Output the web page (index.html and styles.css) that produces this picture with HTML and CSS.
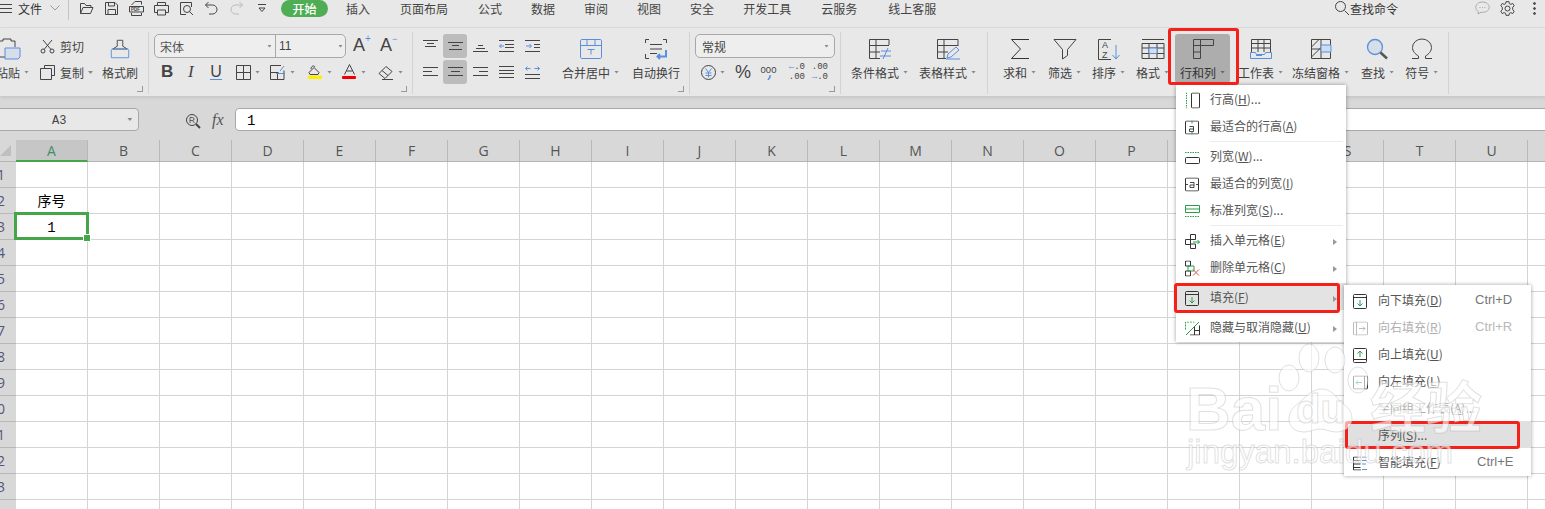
FILE: index.html
```html
<!DOCTYPE html>
<html lang="zh">
<head>
<meta charset="utf-8">
<title>WPS 表格</title>
<link rel="stylesheet" href="styles.css">
</head>
<body>
<div class="app">
  <header class="topbar">
    <svg class="i menu-ic" width="12" height="12" viewBox="0 0 12 12"><path d="M0 2.5h12M0 6.5h12M0 10.5h12"/></svg>
    <span class="file">文件</span>
    <svg class="i chev" width="10" height="6" viewBox="0 0 10 6"><path d="M.5.5 5 5 9.5.5" stroke="#999"/></svg>
    <span class="vsep"></span>
    <div class="quick">
      <svg class="i" width="15" height="15" viewBox="0 0 15 15"><path d="M1.5 12.5v-10h4l1.500 2h5v2M1.500 12.500l2.500-6h10l-2.500 6z"/></svg>
      <svg class="i" width="15" height="15" viewBox="0 0 15 15"><path d="M1.500 1.500h9.500l2.500 2.500v9.500h-12zM4.500 1.500v3.500h6v-3.500M4 13.500v-5h7.500v5"/></svg>
      <svg class="i" width="15" height="15" viewBox="0 0 15 15"><path d="M2.500 4 6 .5h6.500v3M2.500 12v2.500h10V12M.5 5.500h14v5.500H.5z"/><text x="2" y="10" class="pdf">PDF</text></svg>
      <svg class="i" width="15" height="15" viewBox="0 0 15 15"><path d="M3.500 4.500v-3h8v3M3.500 11.500h-3v-7h14v7h-3M3.500 9v5h8V9z"/></svg>
      <svg class="i" width="15" height="15" viewBox="0 0 15 15"><path d="M12.500 6V1.500h-11v12H7"/><circle cx="8" cy="8" r="3.500"/><path d="m10.500 10.500 3.500 3.500"/></svg>
      <svg class="i" width="15" height="15" viewBox="0 0 15 15"><path d="M4.500 1 1.500 4l3 3M1.500 4h7a4.500 4.500 0 0 1 0 9H5"/></svg>
      <svg class="i" width="15" height="15" viewBox="0 0 15 15"><path stroke="#bbb" d="M10.500 1l3 3-3 3M13.500 4h-7a4.500 4.500 0 0 0 0 9H10"/></svg>
      <svg class="i ml3" width="10" height="15" viewBox="0 0 10 15"><path d="M1 3.500h8M2 7l3 3.500L8 7z"/></svg>
    </div>
    <span class="pill">开始</span>
    <nav class="tabs">
      <span>插入</span><span class="ml1">页面布局</span><span class="ml1">公式</span><span>数据</span><span>审阅</span><span>视图</span><span>安全</span><span>开发工具</span><span class="ml1">云服务</span><span class="ml2">线上客服</span>
    </nav>
    <div class="search">
      <svg class="i" width="16" height="16" viewBox="0 0 16 16"><circle cx="6.500" cy="6.500" r="5"/><path d="m10.500 10.500 4.500 4.500"/></svg>
      <span>查找命令</span>
    </div>
    <svg class="i bubble" width="15" height="14" viewBox="0 0 15 14"><path stroke="#aaa" d="M7.500 1C3.500 1 .8 3.300.8 6.300c0 1.800 1 3.300 2.500 4.200L3 13l3-1.800c.5.100 1 .1 1.500.1 4 0 6.700-2.200 6.700-5S11.500 1 7.500 1z"/><path stroke="#aaa" d="M4.500 6.500h1M7 6.500h1M9.500 6.500h1"/></svg>
    <svg class="i gear" width="15" height="15" viewBox="0 0 15 15"><circle cx="7.500" cy="7.500" r="2.500"/><path d="M6 .7h3l.4 2 1.500.7 1.800-1 1.500 2.400-1.500 1.400v2.600l1.500 1.400-1.500 2.400-1.800-1-1.500.7-.4 2H6l-.4-2-1.500-.7-1.800 1L.8 10.200l1.500-1.400V6.200L.8 4.800l1.500-2.400 1.800 1 1.500-.7z"/></svg>
    <span class="dots"></span>
  </header>

  <section class="ribbon">
    <div class="grp g1">
      <div class="tool paste">
        <svg class="i" width="24" height="24" viewBox="0 0 24 24"><path d="M1 20V4h4V2h8v2h4v6M1 20h7"/><path class="bluefill" d="M7 11h15v9l-2 2H7z"/></svg>
        <span class="lab"><span>粘贴</span><i class="car"></i></span>
      </div>
      <div class="smalls">
        <div class="sm">
          <svg class="i" width="15" height="15" viewBox="0 0 15 15"><circle cx="3" cy="12" r="2"/><circle cx="12" cy="12" r="2"/><path d="M4 10.500 12 1M11 10.500 3 1"/></svg>
          <span>剪切</span>
        </div>
        <div class="sm">
          <svg class="i" width="15" height="15" viewBox="0 0 15 15"><path d="M4.500 3.500v-3h10v10h-3M.5 3.500h11v11H.5z"/></svg>
          <span>复制</span><i class="car"></i>
        </div>
      </div>
      <div class="tool">
        <svg class="i" width="22" height="24" viewBox="0 0 22 24"><path d="M8 9V2.500h6V9l5 3H3z"/><path stroke="#5a8fdc" d="M2 12h18M1.500 12.500v9h19v-9"/></svg>
        <span class="lab"><span>格式刷</span></span>
      </div>
      <i class="launch"></i>
    </div>

    <div class="grp g2">
      <div class="frow">
        <div class="select fontsel">
          <span class="fname">宋体</span><i class="car"></i>
          <span class="fsize">11</span><i class="car"></i>
        </div>
        <span class="bigA">A<sup class="plus">+</sup></span>
        <span class="bigA minus">A<sup class="minus-s">−</sup></span>
      </div>
      <div class="ficons">
        <b class="fB">B</b>
        <i class="fI">I</i>
        <span class="fU">U</span>
        <span class="fi"><svg class="i" width="15" height="15" viewBox="0 0 15 15"><path d="M.5.500h14v14H.5zM7.500.5v14M.5 7.500h14"/></svg><i class="car"></i></span>
        <span class="fi"><svg class="i" width="16" height="15" viewBox="0 0 16 15"><path d="M14 5.500v9H.5V.5H11M.5 7.500h8M7.500 7v7"/><path stroke="#5a8fdc" d="M6 8.500h9M10 6l4-5"/></svg><i class="car"></i></span>
        <span class="fi"><svg class="i" width="16" height="16" viewBox="0 0 16 16"><path d="M2 8.500 7 3.500l5 5-1 2H3zM4 5c0-3 3-4 4-2"/><rect x="1" y="11.500" width="14" height="3.500" rx="1" fill="#ffee00" stroke="none"/></svg><i class="car"></i></span>
        <span class="fi"><svg class="i" width="15" height="16" viewBox="0 0 15 16"><path d="m2.500 10.500 5-10 5 10M4.500 7h6"/><rect x="0" y="12" width="14" height="3" rx="1" fill="#f00000" stroke="none"/></svg><i class="car"></i></span>
        <span class="fi"><svg class="i" width="16" height="15" viewBox="0 0 16 15"><path d="m1 8.500 7-7 6 5-7 7zM4 5.500l6 5M4 14.500h11"/></svg><i class="car"></i></span>
      </div>
      <i class="launch"></i>
    </div>

    <div class="grp g3">
      <div class="aligns">
        <span class="al"><svg class="i" width="15" height="12" viewBox="0 0 15 12"><path d="M0 .5h15M4 3.500h7M2 6.500h11"/></svg></span>
        <span class="al on"><svg class="i" width="15" height="12" viewBox="0 0 15 12"><path d="M0 2.500h15M4 5.500h7M1 9.500h13"/></svg></span>
        <span class="al"><svg class="i" width="15" height="12" viewBox="0 0 15 12"><path d="M5 5.500h5M3 8.500h9M0 11.500h15"/></svg></span>
        <span class="al"><svg class="i" width="15" height="12" viewBox="0 0 15 12"><path d="M0 .5h15M6 4.500h9M6 7.500h9M0 11.500h15"/><path stroke="#5a8fdc" d="M5 6H.5M2.500 4 .5 6l2 2"/></svg></span>
        <span class="al"><svg class="i" width="15" height="12" viewBox="0 0 15 12"><path d="M0 .5h15M9 4.500h6M9 7.500h6M0 11.500h15"/><path stroke="#5a8fdc" d="M1 6h5M4.500 4l2 2-2 2"/></svg></span>
        <span class="al"><svg class="i" width="15" height="12" viewBox="0 0 15 12"><path d="M0 1.500h15M0 5.500h9M0 9.500h15"/></svg></span>
        <span class="al on"><svg class="i" width="15" height="12" viewBox="0 0 15 12"><path d="M0 1.500h15M3 5.500h9M0 9.500h15"/></svg></span>
        <span class="al"><svg class="i" width="15" height="12" viewBox="0 0 15 12"><path d="M0 1.500h15M6 5.500h9M0 9.500h15"/></svg></span>
        <span class="al"><svg class="i" width="15" height="12" viewBox="0 0 15 12"><path d="M0 .5h15M0 4.500h15M0 7.500h15M0 11.500h15"/></svg></span>
        <span class="al"><svg class="i" width="15" height="14" viewBox="0 0 15 14"><path d="M0 9.500h15M0 13.500h15"/><path stroke="#5a8fdc" d="M.5 3.500h5M2.500 1.500l-2 2 2 2M9.500 3.500h5M12.500 1.500l2 2-2 2"/></svg></span>
      </div>
      <div class="tool merge">
        <svg class="i" width="24" height="22" viewBox="0 0 24 22"><path stroke="#5a8fdc" d="M1.500 3C1.500 2 2 1.500 3 1.500h18c1 0 1.500.5 1.500 1.500v16c0 1-.5 1.500-1.500 1.500H3c-1 0-1.500-.5-1.500-1.500zM1.500 7.500h21M8 1.500v6M16 1.500v6M8.500 11.500h7M12 11.500v5"/></svg>
        <span class="lab"><span>合并居中</span><i class="car"></i></span>
      </div>
      <div class="tool wrap">
        <svg class="i" width="24" height="22" viewBox="0 0 24 22"><path d="M5 1.500H1.500V5M19 1.500h3.500V5M1.500 16v4.500H5M6 6.500h12M6 11h12M6 15.500h7"/><path stroke="#5a8fdc" stroke-width="2" d="M22 12v6.500H14M16 16l-2.500 2.500L16 21"/></svg>
        <span class="lab"><span>自动换行</span></span>
      </div>
      <i class="launch"></i>
    </div>

    <div class="grp g4">
      <div class="select numsel"><span>常规</span><i class="car"></i></div>
      <div class="nicons">
        <span class="fi"><svg class="i" width="15" height="15" viewBox="0 0 15 15"><circle cx="7.500" cy="7.500" r="7"/><path stroke="#5a8fdc" d="m4.500 3.500 3 4 3-4M4.500 8h6M4.500 10.500h6M7.500 7.500v5"/></svg><i class="car"></i></span>
        <span class="pct">%</span>
        <span class="thou">000<svg class="i comma" width="4" height="5" viewBox="0 0 4 5"><path d="M3 0v2L1 5" stroke="#5a8fdc" stroke-width="1.500"/></svg></span>
        <span class="dec"><span><em>←</em>.0</span><span>.00</span></span>
        <span class="dec"><span>.00</span><span><em>→</em>.0</span></span>
      </div>
      <i class="launch"></i>
    </div>

    <div class="grp g5">
      <div class="tool">
        <svg class="i" width="24" height="22" viewBox="0 0 24 22"><path d="M21 7V1.500H1.500v19H12M1.500 7.500H21M1.500 14H12M8 1.500v19"/><path stroke="#5a8fdc" d="M13 13h10M12 18h11M20 10l-5 11"/></svg>
        <span class="lab"><span>条件格式</span><i class="car"></i></span>
      </div>
      <div class="tool">
        <svg class="i" width="24" height="22" viewBox="0 0 24 22"><path d="M22 8V1.500H1.500v19H10M1.500 7.500H22M1.500 14H12M8 1.500v19"/><path stroke="#5a8fdc" d="m11 20 1-4 8-7 3 3-8 7zM10 21h14"/></svg>
        <span class="lab"><span>表格样式</span><i class="car"></i></span>
      </div>
    </div>

    <div class="grp g6">
      <div class="tool mr1">
        <svg class="i" width="20" height="22" viewBox="0 0 20 22"><path d="M19 1.500H1.500l9 9.500-9 9.500H19" stroke="#333"/></svg>
        <span class="lab"><span>求和</span><i class="car"></i></span>
      </div>
      <div class="tool">
        <svg class="i" width="24" height="22" viewBox="0 0 24 22"><path d="M1 1.500h22l-8.500 10v6l-5 3.500v-9.500z"/></svg>
        <span class="lab"><span>筛选</span><i class="car"></i></span>
      </div>
      <div class="tool">
        <svg class="i" width="24" height="22" viewBox="0 0 24 22"><path d="M14 1.500H1.500v20H14"/><text x="5" y="10" class="az">A</text><text x="5" y="20" class="az">Z</text><path stroke="#5a8fdc" d="M19 7v14M15.500 17l3.500 4 3.500-4"/></svg>
        <span class="lab"><span>排序</span><i class="car"></i></span>
      </div>
      <div class="tool">
        <svg class="i" width="24" height="22" viewBox="0 0 24 22"><path d="M1 1.500h22M1 5.500h22v15H1zM1 10h22M1 15.500h22M8 5.500v15M16 5.500v15"/><path stroke="#5a8fdc" fill="#d6deea" d="M8 10h8v5.500H8z"/></svg>
        <span class="lab"><span>格式</span><i class="car"></i></span>
      </div>
      <div class="tool active">
        <svg class="i" width="22" height="22" viewBox="0 0 22 22"><path d="M1.500 1.500h20v6h-13v13h-7zM8.500 1.500v6H1.500M1.500 14h7"/></svg>
        <span class="lab"><span>行和列</span><i class="car"></i></span>
      </div>
      <div class="tool ml2">
        <svg class="i" width="22" height="22" viewBox="0 0 22 22"><path d="M1.500 14V1.500h19V14M1.500 5.500h19M1.500 10h19M8 1.500V14M14 1.500V14"/><path stroke="#5a8fdc" d="M.5 14.500h5l1 2h8l1-2h6v6H.5zM6 17.500h6"/></svg>
        <span class="lab"><span>工作表</span><i class="car"></i></span>
      </div>
      <div class="tool mln2">
        <svg class="i" width="22" height="22" viewBox="0 0 22 22"><path d="M1.500 1.500h19v19h-19zM1.500 11h19M11 1.500v19M1.500 9 9 1.500M1.500 19 11 9.500M13 1.500"/><path fill="#cfdcef" stroke="#5a8fdc" d="M11 7h10v7H11z"/></svg>
        <span class="lab"><span>冻结窗格</span><i class="car"></i></span>
      </div>
      <div class="tool ml1">
        <svg class="i" width="23" height="22" viewBox="0 0 23 22"><circle cx="9" cy="9" r="7.500" fill="#d6deea" stroke="#5a8fdc" stroke-width="1.300"/><path stroke-width="2.500" stroke="#555" d="m14.500 14.500 6.500 6"/></svg>
        <span class="lab"><span>查找</span><i class="car"></i></span>
      </div>
      <div class="tool">
        <svg class="i" width="22" height="22" viewBox="0 0 22 22"><path d="M1 20.500h6.500v-2.500C4 16 1.500 13 1.500 9.500a9.500 8.500 0 0 1 19 0c0 3.500-2.500 6.500-6 8.500v2.500H21"/></svg>
        <span class="lab"><span>符号</span><i class="car"></i></span>
      </div>
    </div>
  </section>

  <section class="fbar">
    <div class="namebox"><span>A3</span><i class="car"></i></div>
    <svg class="i zoomr" width="16" height="16" viewBox="0 0 16 16"><circle cx="7" cy="7" r="5.500"/><path d="M5 10V4.500h2.500a1.500 1.500 0 0 1 0 3H5M7.500 7.500 9.500 10" stroke-width=".8"/><path stroke-width="2" d="m11 11 4 4"/></svg>
    <span class="fx">fx</span>
    <div class="finput">1</div>
  </section>

  <section class="sheet">
    <div class="colhead">
      <div class="corner"><i></i></div>
      <div class="col sel">A</div><div class="col">B</div><div class="col">C</div><div class="col">D</div><div class="col">E</div><div class="col">F</div><div class="col">G</div><div class="col">H</div><div class="col">I</div><div class="col">J</div><div class="col">K</div><div class="col">L</div><div class="col">M</div><div class="col">N</div><div class="col">O</div><div class="col">P</div><div class="col">Q</div><div class="col">R</div><div class="col">S</div><div class="col">T</div><div class="col">U</div><div class="col"></div>
    </div>
    <div class="row"><div class="rh">1</div></div>
    <div class="row"><div class="rh">2</div><div class="cell">序号</div></div>
    <div class="row"><div class="rh">3</div><div class="cell num active-cell">1</div></div>
    <div class="row"><div class="rh">4</div></div>
    <div class="row"><div class="rh">5</div></div>
    <div class="row"><div class="rh">6</div></div>
    <div class="row"><div class="rh">7</div></div>
    <div class="row"><div class="rh">8</div></div>
    <div class="row"><div class="rh">9</div></div>
    <div class="row"><div class="rh">10</div></div>
    <div class="row"><div class="rh">11</div></div>
    <div class="row"><div class="rh">12</div></div>
    <div class="row"><div class="rh">13</div></div>
    <div class="row"><div class="rh"></div></div>
  </section>

  <div class="menu menu1">
    <div class="mi"><svg class="mic" width="15" height="16" viewBox="0 0 15 16"><path stroke="#2a9d4a" stroke-dasharray="1.500 1" d="M1.500 0v16"/><rect x="6.500" y=".5" width="8" height="15" rx="1"/></svg><span>行高(<u>H</u>)...</span></div>
    <div class="mi"><svg class="mic" width="14" height="14" viewBox="0 0 14 14"><rect x=".5" y=".5" width="13" height="13" rx="1"/><path d="M4.500 6h4v5h-4V8.500h4" stroke-width=".9"/><path stroke="#2a9d4a" d="M7 0v3M7 11v3"/></svg><span>最适合的行高(<u>A</u>)</span></div>
    <div class="msep"></div>
    <div class="mi"><svg class="mic" width="15" height="13" viewBox="0 0 15 13"><path stroke="#2a9d4a" stroke-dasharray="1.500 1" d="M0 1.500h15"/><rect x=".5" y="6.500" width="14" height="6" rx="1"/></svg><span>列宽(<u>W</u>)...</span></div>
    <div class="mi"><svg class="mic" width="14" height="14" viewBox="0 0 14 14"><rect x=".5" y=".5" width="13" height="13" rx="1"/><path d="M5 5h4v5H5V7.500h4M0 7h3M11 7h3" stroke-width=".9"/></svg><span>最适合的列宽(<u>I</u>)</span></div>
    <div class="mi"><svg class="mic" width="15" height="13" viewBox="0 0 15 13"><path stroke="#2a9d4a" d="M.5.500h14v7H.5zM.5 4h14"/><path stroke="#2a9d4a" stroke-dasharray="1.500 1" d="M0 11.500h15"/></svg><span>标准列宽(<u>S</u>)...</span></div>
    <div class="msep"></div>
    <div class="mi"><svg class="mic" width="15" height="15" viewBox="0 0 15 15"><path d="M5.500.5h5v5h-5zM.5 5.500h5v5h-5zM5.500 10h5v4.500h-5z"/><path stroke="#2a9d4a" d="M8 8h6.500M12.500 6l2 2-2 2"/></svg><span>插入单元格(<u>E</u>)</span><i class="arr"></i></div>
    <div class="mi"><svg class="mic" width="15" height="16" viewBox="0 0 15 16"><path d="M.5.500h5v5h-5z"/><path d="M.5 10.500h5v5h-5z"/><path stroke="#2a9d4a" d="M3 5.500h6v5H3z"/><path stroke="#e25555" d="m8 9 6 6M14 9l-6 6"/></svg><span>删除单元格(<u>C</u>)</span><i class="arr"></i></div>
    <div class="mgap"></div>
    <div class="mi hot"><svg class="mic" width="14" height="15" viewBox="0 0 14 15"><rect x=".5" y=".5" width="13" height="14" rx="1"/><path d="M.5 3.500h13"/><path stroke="#2a9d4a" d="M7 6v6M4.500 9.500 7 12l2.500-2.500"/></svg><span>填充(<u>F</u>)</span><i class="arr"></i></div>
    <div class="mgap"></div>
    <div class="mi"><svg class="mic" width="15" height="14" viewBox="0 0 15 14"><path stroke="#2a9d4a" stroke-dasharray="2 1" d="M.5 8V.5h9"/><path d="M14.500 4v9.500H5M9.500 9h5M9.500 4.500v9"/><path stroke="#2a9d4a" d="M1 13.500 14 .5"/></svg><span>隐藏与取消隐藏(<u>U</u>)</span><i class="arr"></i></div>
  </div>

  <div class="menu menu2">
    <div class="mi"><svg class="mic" width="14" height="15" viewBox="0 0 14 15"><rect x=".5" y=".5" width="13" height="14" rx="1"/><path d="M.5 3.500h13"/><path stroke="#2a9d4a" d="M7 6v6M4.500 9.500 7 12l2.500-2.500"/></svg><span>向下填充(<u>D</u>)</span><kbd>Ctrl+D</kbd></div>
    <div class="mi off"><svg class="mic" width="15" height="14" viewBox="0 0 15 14"><rect x=".5" y=".5" width="14" height="13" rx="1" stroke="#bbb"/><path stroke="#bbb" d="M3.500.5v13M6 7h6M10 5l2 2-2 2"/></svg><span>向右填充(<u>R</u>)</span><kbd>Ctrl+R</kbd></div>
    <div class="mi"><svg class="mic" width="14" height="15" viewBox="0 0 14 15"><rect x=".5" y=".5" width="13" height="14" rx="1"/><path d="M.5 11.500h13"/><path stroke="#2a9d4a" d="M7 9V3M4.500 5.500 7 3l2.500 2.500"/></svg><span>向上填充(<u>U</u>)</span></div>
    <div class="mi"><svg class="mic" width="15" height="14" viewBox="0 0 15 14"><rect x=".5" y=".5" width="14" height="13" rx="1"/><path d="M11.500.5v13"/><path stroke="#2a9d4a" d="M9 7H3M5 5 3 7l2 2"/></svg><span>向左填充(<u>L</u>)</span></div>
    <div class="mi off"><span class="noic">至同组工作表(<u>A</u>)...</span></div>
    <div class="mi seq"><span class="noic">序列(<u>S</u>)...</span></div>
    <div class="mi"><svg class="mic" width="15" height="14" viewBox="0 0 15 14"><path d="M8 .5H.5v13H8M.5 4h7M.5 7.500h7M.5 11h7"/><path stroke="#5a8fdc" d="M9 .5h5.500M9 4h5M9 7.500h4M9 13h5"/></svg><span>智能填充(<u>F</u>)</span><kbd class="k2">Ctrl+E</kbd></div>
  </div>

  <i class="red red-tool"></i>
  <i class="red red-fill"></i>
  <i class="red red-seq"></i>

  <svg class="watermark" width="1545" height="509" viewBox="0 0 1545 509">
    <g class="wm">
      <ellipse cx="1309" cy="358" rx="10" ry="14"/>
      <ellipse cx="1335" cy="360" rx="10" ry="13"/>
      <ellipse cx="1289" cy="378" rx="10" ry="13"/>
      <ellipse cx="1358" cy="380" rx="10" ry="13"/>
      <path d="M1322 389c8 0 13 6 18 12 5 5 12 8 12 18 0 9-9 13-16 13-6 0-10-3-16-3-5 0-10 3-16 3-9 0-15-5-15-13 0-9 6-13 12-18 6-5 11-12 21-12z"/>
      <text x="1186" y="430" class="wm-big">Bai</text>
      <text x="1296" y="423" class="wm-du">du</text>
      <text x="1370" y="428" class="wm-cn">经验</text>
      <text x="1187" y="463" class="wm-url">jingyan.baidu.com</text>
    </g>
  </svg>
</div>
</body>
</html>
```

FILE: styles.css
```css
* { box-sizing: border-box; }
html, body { margin: 0; padding: 0; height: 100%; overflow: hidden; background: #fff; }
body { font-family: "Noto Sans CJK SC", "Liberation Sans", sans-serif; font-size: 12px; color: #444; }
.app { position: relative; width: 1545px; height: 509px; overflow: hidden; }
.i { fill: none; stroke: #444; stroke-width: 1; flex: none; display: block; }
.ml1 { margin-left: 1px; }
.ml2 { margin-left: 2px; }
.ml3 { margin-left: 3px; }
.mln2 { margin-left: -2px; }
.mr1 { margin-right: 1px; }

/* top bar */
.topbar { display: flex; align-items: center; height: 28px; padding-bottom: 11px; background: #e8e8e8; border-bottom: 1px solid #d9d9d9; line-height: 17px; }
.file { margin-left: 6px; color: #333; font-size: 12px; }
.chev { margin-left: 8px; }
.vsep { width: 1px; height: 20px; background: #c4c4c4; margin: 0 10px 0 8px; align-self: flex-start; }
.quick { display: flex; align-items: center; gap: 10px; }
.pdf { font: 700 4.500px "Liberation Sans", sans-serif; fill: #444; stroke: none; }
.pill { width: 47px; height: 17px; margin-left: 14px; border-radius: 9px; background: #4fae54; color: #fff; text-align: center; font-weight: 500; }
.tabs { display: flex; gap: 29px; margin-left: 18px; color: #444; }
.search { display: flex; align-items: center; margin-left: auto; margin-right: 77px; color: #333; }
.gear { margin-left: 10px; }
.dots { width: 3px; height: 13px; margin: 0 9px 0 18px; background: radial-gradient(circle at 1.500px 1.500px, #555 1.200px, transparent 1.500px) 0 0 / 3px 5px; }

/* ribbon */
.ribbon { display: flex; height: 68px; padding: 4px 0 2px; background: #e8e8e8; box-shadow: 0 2px 3px rgba(0,0,0,.08); position: relative; }
.grp { position: relative; display: flex; border-right: 1px solid #d2d2d2; flex: none; }
.g1 { width: 149px; }
.g2 { width: 264px; padding: 2px 0 0 5px; flex-direction: column; }
.g3 { width: 277px; padding: 2px 0 0 5px; }
.g3 .tool { margin-top: -2px; }
.g4 { width: 151px; padding: 2px 0 0 5px; flex-direction: column; }
.g5 { width: 147px; padding-left: 10px; gap: 11px; }
.g6 { width: 461px; padding-left: 15px; gap: 11px; }
.tool { display: flex; flex-direction: column; align-items: center; padding-top: 6px; color: #3f3f3f; flex: none; }
.tool > svg { height: 22px; }
.lab { display: flex; align-items: center; height: 16px; margin-top: 4px; white-space: nowrap; }
.car { display: inline-block; flex: none; width: 5px; height: 3px; margin-left: 4px; background: #8a8a8a; clip-path: polygon(0 0, 100% 0, 50% 100%); }
.paste { margin-left: -4px; width: 44px; align-items: flex-start; padding-top: 5px; }
.paste svg { height: 24px; margin-left: 2px; margin-bottom: -1px; }
.bluefill { stroke: #5a8fdc; fill: #d6deea; }
.smalls { width: 62px; display: flex; flex-direction: column; gap: 11px; padding-top: 7px; }
.sm { display: flex; align-items: center; height: 15px; }
.sm span { margin-left: 5px; }
.launch { position: absolute; right: 5px; bottom: 2px; width: 6px; height: 6px; border-right: 1px solid #999; border-bottom: 1px solid #999; }
.select { display: flex; align-items: center; height: 24px; border: 1px solid #a8a8a8; border-radius: 5px; background: #eeeeee; flex: none; }
.frow { display: flex; align-items: flex-start; }
.fontsel { width: 192px; }
.fname { width: 112px; padding-left: 5px; color: #555; font-size: 12px; }
.fontsel .car { margin-left: 0; }
.fsize { width: 63px; margin-left: 3px; padding-left: 3px; height: 22px; border-left: 1px solid #a8a8a8; font: 12px/22px "Liberation Sans", sans-serif; color: #444; }
.bigA { position: relative; margin-left: 7px; font: 18px/22px "Liberation Sans", sans-serif; color: #444; width: 20px; }
.bigA.minus { margin-left: 7px; }
.plus { position: absolute; left: 12px; top: -6px; font-size: 10px; color: #5a8fdc; }
.minus-s { position: absolute; left: 12px; top: -6px; font-size: 9px; color: #5a8fdc; }
.ficons { display: grid; grid-template-columns: 27px 22px 26px 34px 37px 35px 36px auto; height: 16px; margin-top: 6px; padding-left: 7px; align-items: center; }
.fB { font: 700 17px/16px "Liberation Sans", sans-serif; color: #444; }
.fI { font: italic 17px/16px "Liberation Serif", serif; color: #444; }
.fU { font: 16px/14px "Liberation Sans", sans-serif; color: #444; border-bottom: 1px solid #5a8fdc; width: 12px; text-align: center; }
.fi { display: flex; align-items: center; }
.aligns { display: grid; grid-template-columns: 24px 24px 24px 27px 23px; grid-auto-rows: 24px; gap: 2px 1px; align-content: start; }
.al { display: flex; align-items: center; justify-content: center; border-radius: 3px; }
.al.on { background: #bcbcbc; }
.merge { margin-left: 18px; }
.wrap { margin-left: 13px; }
.numsel { width: 140px; padding-left: 6px; justify-content: space-between; padding-right: 5px; color: #444; }
.nicons { display: grid; grid-template-columns: 34px 26px 29px 23px auto; height: 20px; margin-top: 4px; padding-left: 6px; align-items: center; }
.pct { font: 18px/20px "Liberation Sans", sans-serif; color: #444; }
.thou { display: flex; flex-direction: column; align-items: center; width: 15px; font: 9.500px/10px "Liberation Sans", sans-serif; color: #444; }
.comma { margin-top: 0; }
.dec { display: flex; flex-direction: column; align-items: flex-end; width: 15px; font: 9px/10px "Liberation Mono", monospace; color: #444; white-space: nowrap; }
.dec em { font-style: normal; color: #5a8fdc; }
.active { height: 49px; margin-top: 2px; padding: 4px 5px 0; margin-left: -5px; margin-right: -5px; background: #adadad; border-radius: 3px; color: #333; }
.active .car { background: #666; }

/* formula bar */
.fbar { display: flex; align-items: flex-start; height: 44px; padding-top: 12px; background: #d8d8d8; }
.namebox { display: flex; align-items: center; width: 145px; height: 23px; margin-left: -6px; padding-left: 57px; padding-top: 3px; border: 1px solid #a8a8a8; border-radius: 4px; background: #e8e8e8; font: 12px "Liberation Mono", monospace; color: #444; flex: none; }
.namebox .car { margin-left: 61px; margin-top: -3px; }
.zoomr { margin: 5px 0 0 46px; }
.fx { width: 15px; margin: 2px 0 0 11px; font: italic 16px/20px "Liberation Serif", serif; color: #555; }
.finput { flex: 1; height: 23px; margin-left: 8px; margin-right: -4px; padding-left: 11px; border: 1px solid #a8a8a8; border-radius: 4px 0 0 4px; background: #fff; font: 14px/24px "Liberation Mono", monospace; color: #000; }

/* sheet */
.sheet { background: #fff; }
.colhead { display: flex; height: 22px; background: #d8d8d8; border-bottom: 1px solid #b4b4b4; }
.corner { width: 16px; position: relative; flex: none; }
.corner i { position: absolute; left: 0; bottom: 5px; width: 0; height: 0; border-style: solid; border-width: 0 0 11px 11px; border-color: transparent transparent #bfbfbf transparent; }
.col { width: 72px; flex: none; border-right: 1px solid #b8b8b8; text-align: center; font: 14px/21px "Open Sans", sans-serif; color: #555; }
.col.sel { background: #c6c6c6; border-bottom: 2px solid #43a648; height: 22px; color: #3d8f63; }
.row { display: flex; height: 26px; border-bottom: 1px solid #d4d4d4; background: repeating-linear-gradient(to right, transparent 0 71px, #d4d4d4 71px 72px) 16px 0 no-repeat; }
.rh { width: 16px; flex: none; margin-bottom: -1px; overflow: hidden; background: #d8d8d8; border-bottom: 1px solid #b8b8b8; font: 14px/25px "Open Sans", sans-serif; color: #557; direction: rtl; padding-right: 11px; white-space: nowrap; }
.cell { position: relative; width: 71px; text-align: center; font-size: 14px; line-height: 25px; color: #000; flex: none; }
.cell.num { font-family: "Liberation Mono", monospace; line-height: 29px; }
.active-cell::after { content: ""; position: absolute; left: -2px; right: -2px; top: -2px; bottom: -1px; border: 3px solid #43a648; }
.active-cell::before { content: ""; position: absolute; right: -4px; bottom: -3px; width: 6px; height: 6px; background: #43a648; border: 1px solid #fff; z-index: 1; }

/* menus */
.menu { position: absolute; background: #fff; box-shadow: 0 0 4px rgba(0,0,0,.38); }
.menu1 { left: 1176px; top: 85px; width: 170px; height: 257px; }
.menu2 { left: 1344px; top: 285px; width: 187px; height: 191px; padding-top: 1px; }
.mi { position: relative; display: flex; align-items: center; height: 27px; padding-left: 34px; color: #555; white-space: nowrap; }
.mic { position: absolute; left: 9px; top: 50%; transform: translateY(calc(-50% + 1.5px)); fill: none; stroke: #333; }
.msep { height: 1px; margin: 2px 3px 0 34px; background: #ececec; }
.mgap { height: 3px; }
.hot { background: #e3e3e3; }
.arr { position: absolute; right: 9px; top: 13px; width: 4px; height: 6px; background: #999; clip-path: polygon(0 0, 100% 50%, 0 100%); }
.off { color: #b0b0b0; }
kbd { position: absolute; left: 131px; font: 13px "Liberation Sans", sans-serif; color: #777; }
.off kbd { color: #b8b8b8; }
.k2 { left: 133px; }
.seq { background: #e0e0e0; }

/* red highlights */
.red { position: absolute; border: 3px solid #f5201a; border-radius: 3px; }
.red-tool { left: 1168px; top: 28px; width: 71px; height: 57px; }
.red-fill { left: 1174px; top: 283px; width: 166px; height: 30px; }
.red-seq { left: 1345px; top: 421px; width: 175px; height: 28px; }

/* watermark */
.watermark { position: absolute; left: 0; top: 0; pointer-events: none; }
.wm { fill: rgba(255,255,255,.6); stroke: rgba(165,165,165,.35); stroke-width: 1; }
.wm-big { font: 700 62px "Liberation Sans", sans-serif; }
.wm-du { font: 700 40px "Liberation Sans", sans-serif; }
.wm-cn { font: 700 56px "Noto Sans CJK SC", sans-serif; }
.wm-url { font: 33px "Liberation Sans", sans-serif; }
.az { font: 9px "Liberation Sans", sans-serif; fill: #444; stroke: none; }
u { text-decoration: underline; }
```
